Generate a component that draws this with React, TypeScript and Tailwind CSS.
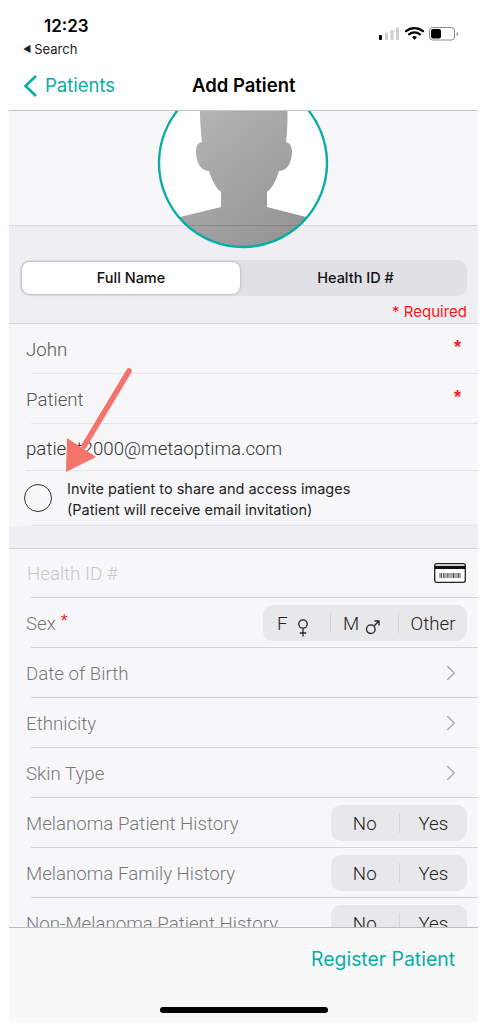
import React from "react";
import { ChevronRight } from "lucide-react";

const SANS = "font-['Inter',sans-serif]";
const BODY = "font-['Roboto',sans-serif] font-light";

function CellLine({ inset = "ml-[22px]", color = "bg-[#e4e4e7]" }: { inset?: string; color?: string }) {
  return <div className={`${inset} h-px ${color}`} />;
}

function StatusIcons() {
  return (
    <svg width="82" height="16" viewBox="0 0 82 16" className="block">
      {/* signal */}
      <rect x="0" y="9" width="3" height="5" rx="1" fill="#000" />
      <rect x="6" y="6.5" width="3" height="7.5" rx="1" fill="#cfcfcf" />
      <rect x="11.5" y="4" width="3" height="10" rx="1" fill="#cfcfcf" />
      <rect x="17" y="1.5" width="3" height="12.5" rx="1" fill="#cfcfcf" />
      {/* wifi */}
      <path d="M27 5.2 a13 13 0 0 1 17 0" fill="none" stroke="#000" strokeWidth="2.2" strokeLinecap="round" />
      <path d="M30 8.4 a8.5 8.5 0 0 1 11 0" fill="none" stroke="#000" strokeWidth="2.1" strokeLinecap="round" />
      <path d="M33 11 a4 4 0 0 1 5 0 L35.5 14 Z" fill="#000" />
      {/* battery */}
      <rect x="50.5" y="1.5" width="25" height="12.5" rx="3" fill="none" stroke="#8a8a8a" />
      <rect x="52" y="3" width="10" height="9.5" rx="2" fill="#000" />
      <path d="M77.5 6 a2 2 0 0 1 0 4 Z" fill="#a5a5a5" />
    </svg>
  );
}

function Avatar() {
  // drawn in a 174 box, circle centre 87,87
  return (
    <svg width="174" height="174" viewBox="0 0 174 174" className="block">
      <defs>
        <clipPath id="avatar-clip">
          <circle cx="87" cy="87" r="84" />
        </clipPath>
        <linearGradient id="avatar-fill" x1="0.1" y1="0" x2="0.9" y2="1">
          <stop offset="0" stopColor="#bcbcbc" />
          <stop offset="1" stopColor="#909090" />
        </linearGradient>
      </defs>
      <circle cx="87" cy="87" r="84" fill="#fff" />
      <g clipPath="url(#avatar-clip)">
        <path
          fill="url(#avatar-fill)"
          d="M44 0 L44 40 C44.5 50 45 58 46 66 C41 67 40 71 40 76 C40 88 46 95 53 95 C56 105 60 112 65 116 L65 131 L20 142 L0 174 L174 174 L154 142 L111 131 L111 116 C116 112 120 105 123 95 C130 95 136 88 136 76 C136 71 134 67 130 66 C131 58 131.500 50 131.500 40 L131 0 Z"
        />
        <rect x="0" y="149" width="174" height="1" fill="#000" fillOpacity="0.13" />
      </g>
      <circle cx="87" cy="87" r="84" fill="none" stroke="#08aea6" strokeWidth="2.4" />
    </svg>
  );
}

function BarcodeIcon() {
  return (
    <svg width="32" height="20" viewBox="0 0 32 20" className="block">
      <rect x="0.7" y="0.7" width="30.600" height="18.600" rx="2" fill="#fff" stroke="#222" strokeWidth="1.3" />
      <rect x="1" y="2.800" width="30" height="3.200" fill="#111" />
      <path
        d="M6 10v5M7.500 10v5M9.500 10v5M11 10v5M13 10v5M14 10v5M16 10v5M18 10v5M19.500 10v5M21 10v5M23 10v5M24.500 10v5M26 10v5"
        stroke="#555"
        strokeWidth="1"
      />
    </svg>
  );
}

function FemaleIcon() {
  return (
    <svg width="12" height="20" viewBox="0 0 12 20" className="block">
      <circle cx="6" cy="6" r="4.200" fill="none" stroke="#222" strokeWidth="1.300" />
      <path d="M6 10.500v8M2.800 15h6.400" stroke="#222" strokeWidth="1.300" fill="none" />
    </svg>
  );
}

function MaleIcon() {
  return (
    <svg width="15" height="15" viewBox="0 0 15 15" className="block">
      <circle cx="5.800" cy="9.200" r="4.300" fill="none" stroke="#222" strokeWidth="1.300" />
      <path d="M9 6 13.800 1.200M9.500 1h4.500v4.500" stroke="#222" strokeWidth="1.300" fill="none" />
    </svg>
  );
}

function Divider() {
  return <div className="h-[20px] w-px bg-[#d4d4d8]" />;
}

function Row({ label, children }: { label: React.ReactNode; children?: React.ReactNode }) {
  return (
    <>
      <div className="flex h-[49px] items-center justify-between pl-[17px] pr-[11px]">
        <div className={`${BODY} pt-[4px] text-[18.700px] text-[#77777b]`}>{label}</div>
        {children}
      </div>
      <CellLine color="bg-[#d6d6d9]" />
    </>
  );
}

function Chevron() {
  return <ChevronRight size={26} strokeWidth={1.300} className="mr-[3px] text-[#a9a9ac]" />;
}

function NoYes() {
  return (
    <div className={`flex h-[36px] w-[136px] items-center rounded-[10px] bg-[#e8e8eb] ${BODY} text-[18.700px] text-[#222]`}>
      <div className="flex-1 pt-[3px] text-center">No</div>
      <Divider />
      <div className="flex-1 pt-[3px] text-center">Yes</div>
    </div>
  );
}

function TextCell({ value, required }: { value: string; required?: boolean }) {
  return (
    <div className="flex h-[49px] items-center justify-between pl-[17px] pr-[17px] pt-[4px]">
      <span className={`${BODY} text-[18.700px] text-[#555558]`}>{value}</span>
      {required && <span className="-mt-[8px] font-['Liberation_Sans',sans-serif] text-[18px] font-bold leading-none text-[#fc1c1c]">*</span>}
    </div>
  );
}

export default function App() {
  return (
    <div className="relative h-[1032px] w-[491px] overflow-hidden bg-white">
      {/* status bar */}
      <div className={`flex h-[66px] justify-between ${SANS}`}>
        <div className="pl-[23px]">
          <div className="pl-[21px] pt-[14px] text-[17px] font-semibold leading-[24px] text-black">12:23</div>
          <div className="flex items-center gap-[3px] pt-[1px] text-[13px] leading-[20px] text-[#222]">
            <span className="text-[9px]">◀</span>
            <span>Search</span>
          </div>
        </div>
        <div className="pr-[30px] pt-[26px]">
          <StatusIcons />
        </div>
      </div>

      {/* nav bar */}
      <div className={`relative z-10 ml-[9px] flex h-[45px] w-[469px] items-center border-b border-[#c4c4c6] bg-white pb-[4px] ${SANS}`}>
        <svg width="16" height="24" viewBox="0 0 16 24" className="ml-[13px] block">
          <path d="M14 2 3.500 12 14 22" fill="none" stroke="#08aea6" strokeWidth="2.600" />
        </svg>
        <span className="ml-[7px] text-[18.500px] text-[#08aea6]">Patients</span>
        <span className="absolute left-[183px] text-[18.500px] font-semibold text-black">Add Patient</span>
      </div>

      {/* scrolling form */}
      <div className="relative ml-[9px] h-[816px] w-[469px] overflow-hidden bg-[#f7f7fa]">
        <div className="absolute left-[147px] top-[-35px] z-10">
          <Avatar />
        </div>

        <div className="h-[115px] border-b border-[#d6d6d9]" />

        <div className="h-[98px] border-b border-[#d6d6d9] bg-[#eeeef3] px-[11px] pt-[34px]">
          <div className={`flex h-[36px] rounded-[10px] bg-[#e0e0e5] ${SANS} text-[14.500px] font-medium text-[#111]`}>
            <div className="my-[2px] ml-[2px] flex w-[218px] items-center justify-center rounded-[8px] bg-white shadow-[0_0_3px_rgba(0,0,0,0.3)]">
              Full Name
            </div>
            <div className="flex flex-1 items-center justify-center pl-[4px]">Health ID #</div>
          </div>
          <div className={`pt-[6px] text-right ${SANS} text-[15px] leading-[20px] text-[#ff1414]`}>* Required</div>
        </div>

        <TextCell value="John" required />
        <CellLine />
        <TextCell value="Patient" required />
        <CellLine />
        <div className="flex h-[46px] items-center pl-[17px] pt-[4px]">
          <span className={`${BODY} text-[18.700px] text-[#333336]`}>patient2000@metaoptima.com</span>
        </div>
        <CellLine inset="ml-[17px]" />
        <div className="flex h-[54px] items-center pl-[15px]">
          <div className="h-[28px] w-[28px] rounded-full border-[1.500px] border-[#333]" />
          <div className={`ml-[15px] pt-[2px] ${SANS} text-[14.500px] leading-[21px] text-[#222]`}>
            <div>Invite patient to share and access images</div>
            <div>(Patient will receive email invitation)</div>
          </div>
        </div>
        <CellLine />

        <div className="h-[23px] border-b border-[#d6d6d9] bg-[#eeeef3]" />

        <div className="flex h-[48px] items-center justify-between pl-[18px] pr-[12px]">
          <span className={`${BODY} pt-[2px] text-[18.700px] text-[#c8c8c8]`}>Health ID #</span>
          <BarcodeIcon />
        </div>
        <CellLine color="bg-[#d6d6d9]" />

        <Row
          label={
            <span className="flex items-start">
              Sex<span className="ml-[5px] font-['Liberation_Sans',sans-serif] text-[18px] leading-[22px] text-[#fc1c1c]">*</span>
            </span>
          }
        >
          <div className={`flex h-[36px] w-[204px] items-center rounded-[10px] bg-[#e8e8eb] ${BODY} text-[18.700px] text-[#222]`}>
            <div className="flex w-[67px] items-center pl-[14px] pt-[3px]">
              F<span className="ml-[9px] mt-[8px]"><FemaleIcon /></span>
            </div>
            <Divider />
            <div className="flex w-[67px] items-center pl-[12px] pt-[3px]">
              M<span className="ml-[6px] mt-[8px]"><MaleIcon /></span>
            </div>
            <Divider />
            <div className="flex-1 pt-[3px] text-center">Other</div>
          </div>
        </Row>
        <Row label="Date of Birth"><Chevron /></Row>
        <Row label="Ethnicity"><Chevron /></Row>
        <Row label="Skin Type"><Chevron /></Row>
        <Row label="Melanoma Patient History"><NoYes /></Row>
        <Row label="Melanoma Family History"><NoYes /></Row>
        <Row label="Non-Melanoma Patient History"><NoYes /></Row>
      </div>

      {/* footer */}
      <div className={`relative ml-[9px] h-[95px] w-[469px] border-t border-[#bcbcbf] bg-[#f8f8f9] ${SANS}`}>
        <div className="pr-[23px] pt-[17px] text-right text-[19.400px] text-[#08aea6]">Register Patient</div>
        <div className="absolute bottom-[9px] left-[151px] h-[6px] w-[168px] rounded-full bg-black" />
      </div>

      {/* annotation arrow */}
      <svg width="491" height="1032" viewBox="0 0 491 1032" className="pointer-events-none absolute left-0 top-0 z-20">
        <path d="M129 371 84 446" fill="none" stroke="#f4736a" strokeWidth="5.500" strokeLinecap="round" />
        <path d="M67 438 96 457 66 472 Z" fill="#f4736a" />
      </svg>
    </div>
  );
}
